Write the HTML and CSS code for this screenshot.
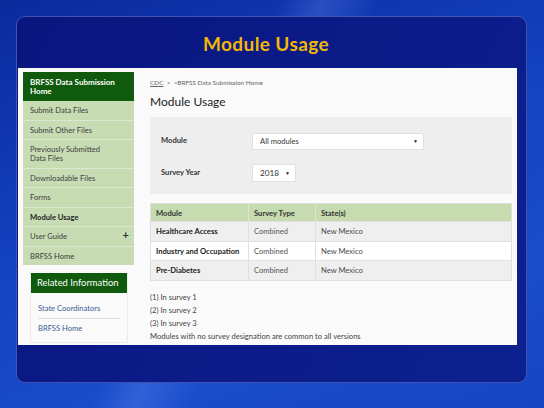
FILE: index.html
```html
<!DOCTYPE html>
<html lang="en">
<head>
    <meta charset="UTF-8">
    <title>Module Usage</title>
    <link rel="stylesheet" href="styles.css">
</head>
<body>

<div class="slide">
    <h1 class="slide-title">Module Usage</h1>

    <div class="shot">
        <div class="side">
            <ul class="side-nav">
                <li class="side-head">BRFSS Data Submission<br>Home</li>
                <li>Submit Data Files</li>
                <li>Submit Other Files</li>
                <li>Previously Submitted<br>Data Files</li>
                <li>Downloadable Files</li>
                <li>Forms</li>
                <li class="active">Module Usage</li>
                <li class="has-sub">User Guide<span class="plus">+</span></li>
                <li>BRFSS Home</li>
            </ul>

            <div class="related">
                <h3>Related Information</h3>
                <ul>
                    <li>State Coordinators</li>
                    <li>BRFSS Home</li>
                </ul>
            </div>
        </div>

        <div class="main">
            <p class="crumbs"><span class="crumb-link">CDC</span> &nbsp;&gt;&nbsp; &gt;BRFSS Data Submission Home</p>
            <h2 class="page-title">Module Usage</h2>

            <div class="filter">
                <div class="field">
                    <span class="field-label">Module</span>
                    <span class="select select-wide">All modules<i class="caret">&#9660;</i></span>
                </div>
                <div class="field">
                    <span class="field-label">Survey Year</span>
                    <span class="select select-year">2018<i class="caret">&#9660;</i></span>
                </div>
            </div>

            <table class="modules">
                <thead>
                <tr>
                    <th class="col-module">Module</th>
                    <th class="col-type">Survey Type</th>
                    <th>State(s)</th>
                </tr>
                </thead>
                <tbody>
                <tr>
                    <td class="name">Healthcare Access</td>
                    <td>Combined</td>
                    <td class="state">New Mexico</td>
                </tr>
                <tr>
                    <td class="name">Industry and Occupation</td>
                    <td>Combined</td>
                    <td class="state">New Mexico</td>
                </tr>
                <tr>
                    <td class="name">Pre-Diabetes</td>
                    <td>Combined</td>
                    <td class="state">New Mexico</td>
                </tr>
                </tbody>
            </table>

            <div class="notes">
                <p>(1) In survey 1</p>
                <p>(2) In survey 2</p>
                <p>(3) In survey 3</p>
                <p>Modules with no survey designation are common to all versions</p>
            </div>
        </div>
    </div>
</div>

</body>
</html>
```

FILE: styles.css
```css
* {
    margin: 0;
    padding: 0;
}

html, body {
    width: 544px;
    height: 408px;
    overflow: hidden;
}

body {
    box-sizing: border-box;
    padding: 16px 0 0 16px;
    font-family: Lato, "Open Sans", sans-serif;
    background:
        linear-gradient(115deg, rgba(255, 255, 255, 0) 38%, rgba(120, 160, 255, .25) 44%, rgba(255, 255, 255, 0) 52%),
        linear-gradient(160deg, #0a2a9c 0%, #1442c2 45%, #1a4ccc 75%, #1744c4 100%);
}

.slide {
    box-sizing: border-box;
    width: 511px;
    height: 367px;
    border: 1px solid rgba(140, 170, 240, .4);
    border-radius: 9px;
    background: linear-gradient(120deg, #0a1680 0%, #0b1b88 50%, #0d2190 100%);
}

.slide-title {
    box-sizing: border-box;
    height: 51px;
    padding: 15px 11px 0 0;
    font-size: 19px;
    line-height: 23px;
    font-weight: bold;
    letter-spacing: .4px;
    text-align: center;
    color: #f2b705;
}

.shot {
    display: flex;
    width: 499px;
    height: 277px;
    margin-left: 1px;
    box-sizing: border-box;
    padding: 4px 5px 0 5px;
    background: #fafafa;
}

/* sidebar */
.side {
    width: 111px;
    flex: none;
}

.side-nav {
    list-style: none;
    background: #c8dcb4;
}

.side-nav li {
    position: relative;
    padding: 5px 7px 4.5px;
    font-size: 7.6px;
    line-height: 9px;
    color: #3c3c3c;
    border-bottom: 1px solid #dbe8cf;
}

.side-nav li:last-child {
    border-bottom: 0;
}

.side-nav .side-head {
    padding: 6px 7px 5px;
    font-weight: bold;
    font-size: 8px;
    color: #ffffff;
    background: #0f5a0c;
    border-bottom: 0;
}

.side-nav .active {
    font-weight: bold;
    color: #222222;
}

.plus {
    position: absolute;
    right: 5px;
    top: 3px;
    font-size: 11px;
    font-weight: bold;
    color: #333333;
}

.related {
    margin: 8px 6px 0 7px;
    border: 1px dotted #dddddd;
    border-top: 0;
}

.related h3 {
    height: 20px;
    line-height: 20px;
    padding-left: 6px;
    font-size: 9.4px;
    font-weight: normal;
    color: #ffffff;
    background: #0f5a0c;
}

.related ul {
    list-style: none;
    padding: 6px 7px 4px;
}

.related li {
    padding: 5px 0;
    font-size: 7.6px;
    line-height: 9px;
    color: #3d5d95;
    border-bottom: 1px solid #dddddd;
}

.related li:last-child {
    border-bottom: 0;
}

/* main column */
.main {
    width: 362px;
    margin-left: 16px;
    padding-top: 7px;
}

.crumbs {
    font-size: 6.4px;
    line-height: 8px;
    color: #666666;
}

.crumb-link {
    text-decoration: underline;
}

.page-title {
    margin: 8px 0 8px;
    font-size: 12px;
    line-height: 14px;
    font-weight: normal;
    color: #222222;
}

.filter {
    box-sizing: border-box;
    height: 77px;
    padding: 16px 0 0 11px;
    background: #eeeeee;
}

.field {
    display: flex;
    align-items: center;
}

.field + .field {
    margin-top: 14px;
}

.field-label {
    width: 91px;
    margin-top: -3px;
    font-size: 7.6px;
    font-weight: bold;
    color: #333333;
}

.select {
    position: relative;
    box-sizing: border-box;
    display: block;
    padding-left: 7px;
    font-size: 7.6px;
    color: #333333;
    background: #ffffff;
    border: 1px solid #e0e0e0;
    border-radius: 2px;
}

.select-wide {
    width: 172px;
    height: 17px;
    line-height: 15px;
}

.select-year {
    width: 44px;
    height: 18px;
    line-height: 16px;
    font-size: 8.2px;
}

.caret {
    position: absolute;
    right: 5px;
    top: 0;
    font-style: normal;
    font-size: 5px;
    color: #222222;
}

.modules {
    width: 362px;
    margin-top: 9px;
    border-collapse: collapse;
    font-size: 7.6px;
}

.modules th,
.modules td {
    padding: 0 5px;
    text-align: left;
    border: 1px solid #e0e0e0;
}

.modules th {
    height: 17px;
    font-weight: bold;
    color: #333333;
    background: #c6dcb0;
}

.modules td {
    height: 18.5px;
    color: #555555;
}

.modules td.state {
    color: #4a4a4a;
}

.modules tbody tr:nth-child(odd) {
    background: #efefef;
}

.modules tbody tr:nth-child(even) {
    background: #ffffff;
}

.modules td.name {
    font-weight: bold;
    color: #222222;
}

.col-module {
    width: 87px;
}

.col-type {
    width: 56px;
}

.notes {
    margin-top: 10px;
    font-size: 7.6px;
    line-height: 13.3px;
    color: #444444;
}
```
